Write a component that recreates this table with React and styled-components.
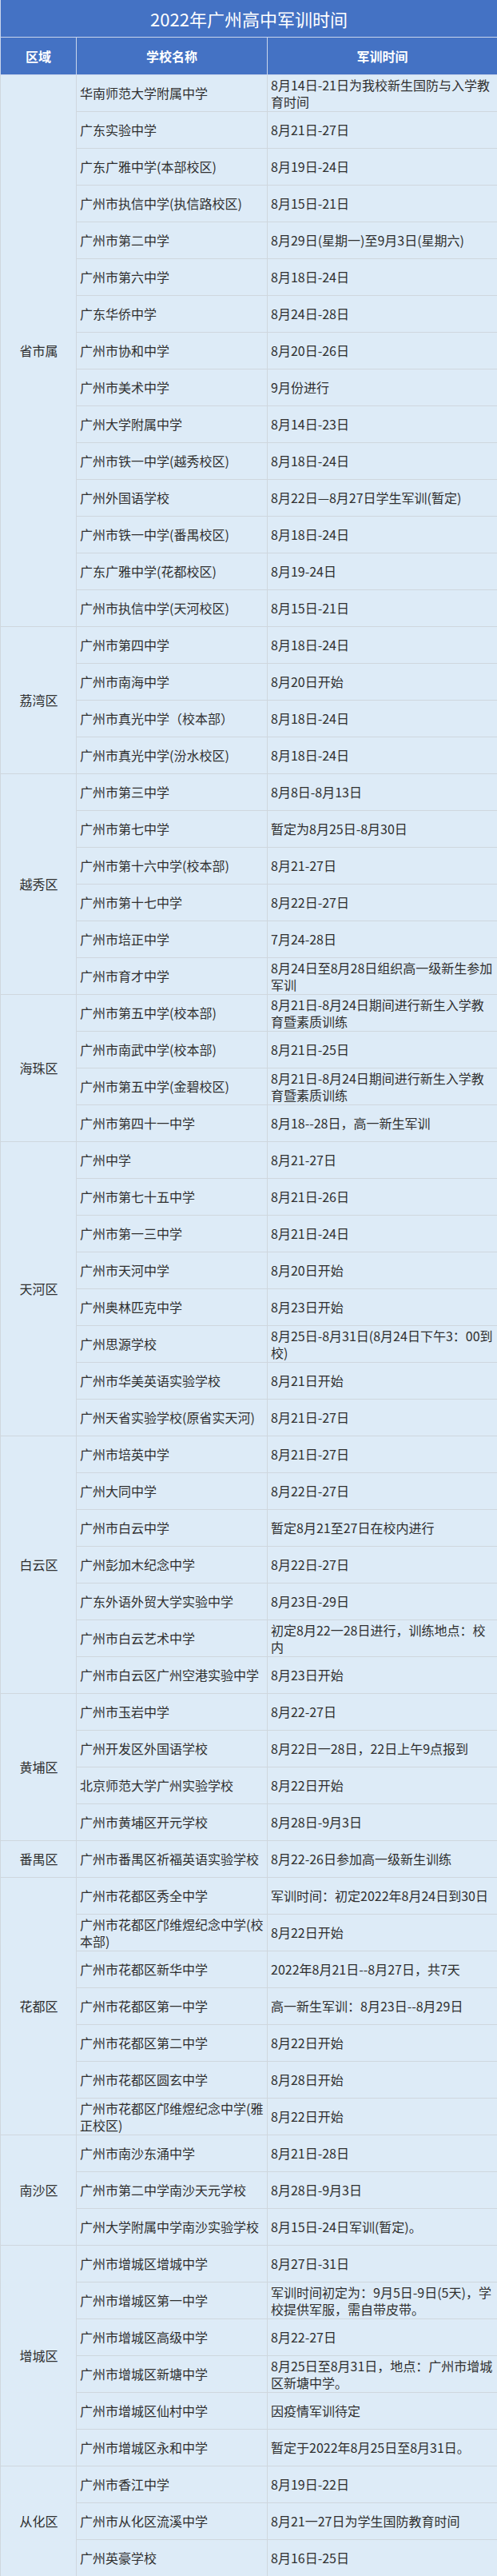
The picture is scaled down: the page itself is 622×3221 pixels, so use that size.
import React from 'react';
import styled, { createGlobalStyle } from 'styled-components';

const GlobalStyle = createGlobalStyle`
  html, body {
    margin: 0;
    padding: 0;
    background: #ffffff;
  }
  body {
    font-family: "Noto Sans CJK SC", "Noto Sans", "Liberation Sans", sans-serif;
  }
`;

const Table = styled.table`
  width: 622px;
  border-collapse: collapse;
  table-layout: fixed;
  background: #ddebf7;
  color: #2f2f2f;
`;

const TitleCell = styled.th`
  height: 46px;
  padding: 0;
  background: #4472c4;
  color: #ffffff;
  font-size: 22px;
  font-weight: 400;
  text-align: center;
  border: 1px solid #c9d5ec;
  border-top: none;
`;

const HeadCell = styled.th`
  height: 46px;
  padding: 0;
  background: #4472c4;
  color: #ffffff;
  font-size: 16px;
  font-weight: 700;
  text-align: center;
  border: 1px solid #c9d5ec;
`;

const Row = styled.tr`
  height: 46px;
`;

const Cell = styled.td`
  padding: 0 3px 0 4px;
  font-size: 16px;
  line-height: 21px;
  vertical-align: middle;
  text-align: ${p => (p.$center ? 'center' : 'left')};
  border: 1px solid #cfd7de;
  word-break: break-all;
`;

const groups = [
  {
    region: '省市属',
    rows: [
      ['华南师范大学附属中学', '8月14日-21日为我校新生国防与入学教育时间'],
      ['广东实验中学', '8月21日-27日'],
      ['广东广雅中学(本部校区)', '8月19日-24日'],
      ['广州市执信中学(执信路校区)', '8月15日-21日'],
      ['广州市第二中学', '8月29日(星期一)至9月3日(星期六)'],
      ['广州市第六中学', '8月18日-24日'],
      ['广东华侨中学', '8月24日-28日'],
      ['广州市协和中学', '8月20日-26日'],
      ['广州市美术中学', '9月份进行'],
      ['广州大学附属中学', '8月14日-23日'],
      ['广州市铁一中学(越秀校区)', '8月18日-24日'],
      ['广州外国语学校', '8月22日—8月27日学生军训(暂定)'],
      ['广州市铁一中学(番禺校区)', '8月18日-24日'],
      ['广东广雅中学(花都校区)', '8月19-24日'],
      ['广州市执信中学(天河校区)', '8月15日-21日'],
    ],
  },
  {
    region: '荔湾区',
    rows: [
      ['广州市第四中学', '8月18日-24日'],
      ['广州市南海中学', '8月20日开始'],
      ['广州市真光中学（校本部）', '8月18日-24日'],
      ['广州市真光中学(汾水校区)', '8月18日-24日'],
    ],
  },
  {
    region: '越秀区',
    rows: [
      ['广州市第三中学', '8月8日-8月13日'],
      ['广州市第七中学', '暂定为8月25日-8月30日'],
      ['广州市第十六中学(校本部)', '8月21-27日'],
      ['广州市第十七中学', '8月22日-27日'],
      ['广州市培正中学', '7月24-28日'],
      ['广州市育才中学', '8月24日至8月28日组织高一级新生参加军训'],
    ],
  },
  {
    region: '海珠区',
    rows: [
      ['广州市第五中学(校本部)', '8月21日-8月24日期间进行新生入学教育暨素质训练'],
      ['广州市南武中学(校本部)', '8月21日-25日'],
      ['广州市第五中学(金碧校区)', '8月21日-8月24日期间进行新生入学教育暨素质训练'],
      ['广州市第四十一中学', '8月18--28日，高一新生军训'],
    ],
  },
  {
    region: '天河区',
    rows: [
      ['广州中学', '8月21-27日'],
      ['广州市第七十五中学', '8月21日-26日'],
      ['广州市第一三中学', '8月21日-24日'],
      ['广州市天河中学', '8月20日开始'],
      ['广州奥林匹克中学', '8月23日开始'],
      ['广州思源学校', '8月25日-8月31日(8月24日下午3：00到校)'],
      ['广州市华美英语实验学校', '8月21日开始'],
      ['广州天省实验学校(原省实天河)', '8月21日-27日'],
    ],
  },
  {
    region: '白云区',
    rows: [
      ['广州市培英中学', '8月21日-27日'],
      ['广州大同中学', '8月22日-27日'],
      ['广州市白云中学', '暂定8月21至27日在校内进行'],
      ['广州彭加木纪念中学', '8月22日-27日'],
      ['广东外语外贸大学实验中学', '8月23日-29日'],
      ['广州市白云艺术中学', '初定8月22一28日进行，训练地点：校内'],
      ['广州市白云区广州空港实验中学', '8月23日开始'],
    ],
  },
  {
    region: '黄埔区',
    rows: [
      ['广州市玉岩中学', '8月22-27日'],
      ['广州开发区外国语学校', '8月22日一28日，22日上午9点报到'],
      ['北京师范大学广州实验学校', '8月22日开始'],
      ['广州市黄埔区开元学校', '8月28日-9月3日'],
    ],
  },
  {
    region: '番禺区',
    rows: [['广州市番禺区祈福英语实验学校', '8月22-26日参加高一级新生训练']],
  },
  {
    region: '花都区',
    rows: [
      ['广州市花都区秀全中学', '军训时间：初定2022年8月24日到30日'],
      ['广州市花都区邝维煜纪念中学(校本部)', '8月22日开始'],
      ['广州市花都区新华中学', '2022年8月21日--8月27日，共7天'],
      ['广州市花都区第一中学', '高一新生军训：8月23日--8月29日'],
      ['广州市花都区第二中学', '8月22日开始'],
      ['广州市花都区圆玄中学', '8月28日开始'],
      ['广州市花都区邝维煜纪念中学(雅正校区)', '8月22日开始'],
    ],
  },
  {
    region: '南沙区',
    rows: [
      ['广州市南沙东涌中学', '8月21日-28日'],
      ['广州市第二中学南沙天元学校', '8月28日-9月3日'],
      ['广州大学附属中学南沙实验学校', '8月15日-24日军训(暂定)。'],
    ],
  },
  {
    region: '增城区',
    rows: [
      ['广州市增城区增城中学', '8月27日-31日'],
      ['广州市增城区第一中学', '军训时间初定为：9月5日-9日(5天)，学校提供军服，需自带皮带。'],
      ['广州市增城区高级中学', '8月22-27日'],
      ['广州市增城区新塘中学', '8月25日至8月31日，地点：广州市增城区新塘中学。'],
      ['广州市增城区仙村中学', '因疫情军训待定'],
      ['广州市增城区永和中学', '暂定于2022年8月25日至8月31日。'],
    ],
  },
  {
    region: '从化区',
    rows: [
      ['广州市香江中学', '8月19日-22日'],
      ['广州市从化区流溪中学', '8月21一27日为学生国防教育时间'],
      ['广州英豪学校', '8月16日-25日'],
    ],
  },
];

function App() {
  return (
    <>
      <GlobalStyle />
      <Table>
        <colgroup>
          <col style={{ width: 95 }} />
          <col style={{ width: 239 }} />
          <col style={{ width: 288 }} />
        </colgroup>
        <thead>
          <tr>
            <TitleCell colSpan={3}>2022年广州高中军训时间</TitleCell>
          </tr>
          <tr>
            <HeadCell>区域</HeadCell>
            <HeadCell>学校名称</HeadCell>
            <HeadCell>军训时间</HeadCell>
          </tr>
        </thead>
        <tbody>
          {groups.map(group =>
            group.rows.map(([school, time], i) => (
              <Row key={group.region + i}>
                {i === 0 && (
                  <Cell $center rowSpan={group.rows.length}>
                    {group.region}
                  </Cell>
                )}
                <Cell>{school}</Cell>
                <Cell>{time}</Cell>
              </Row>
            ))
          )}
        </tbody>
      </Table>
    </>
  );
}

export default App;
